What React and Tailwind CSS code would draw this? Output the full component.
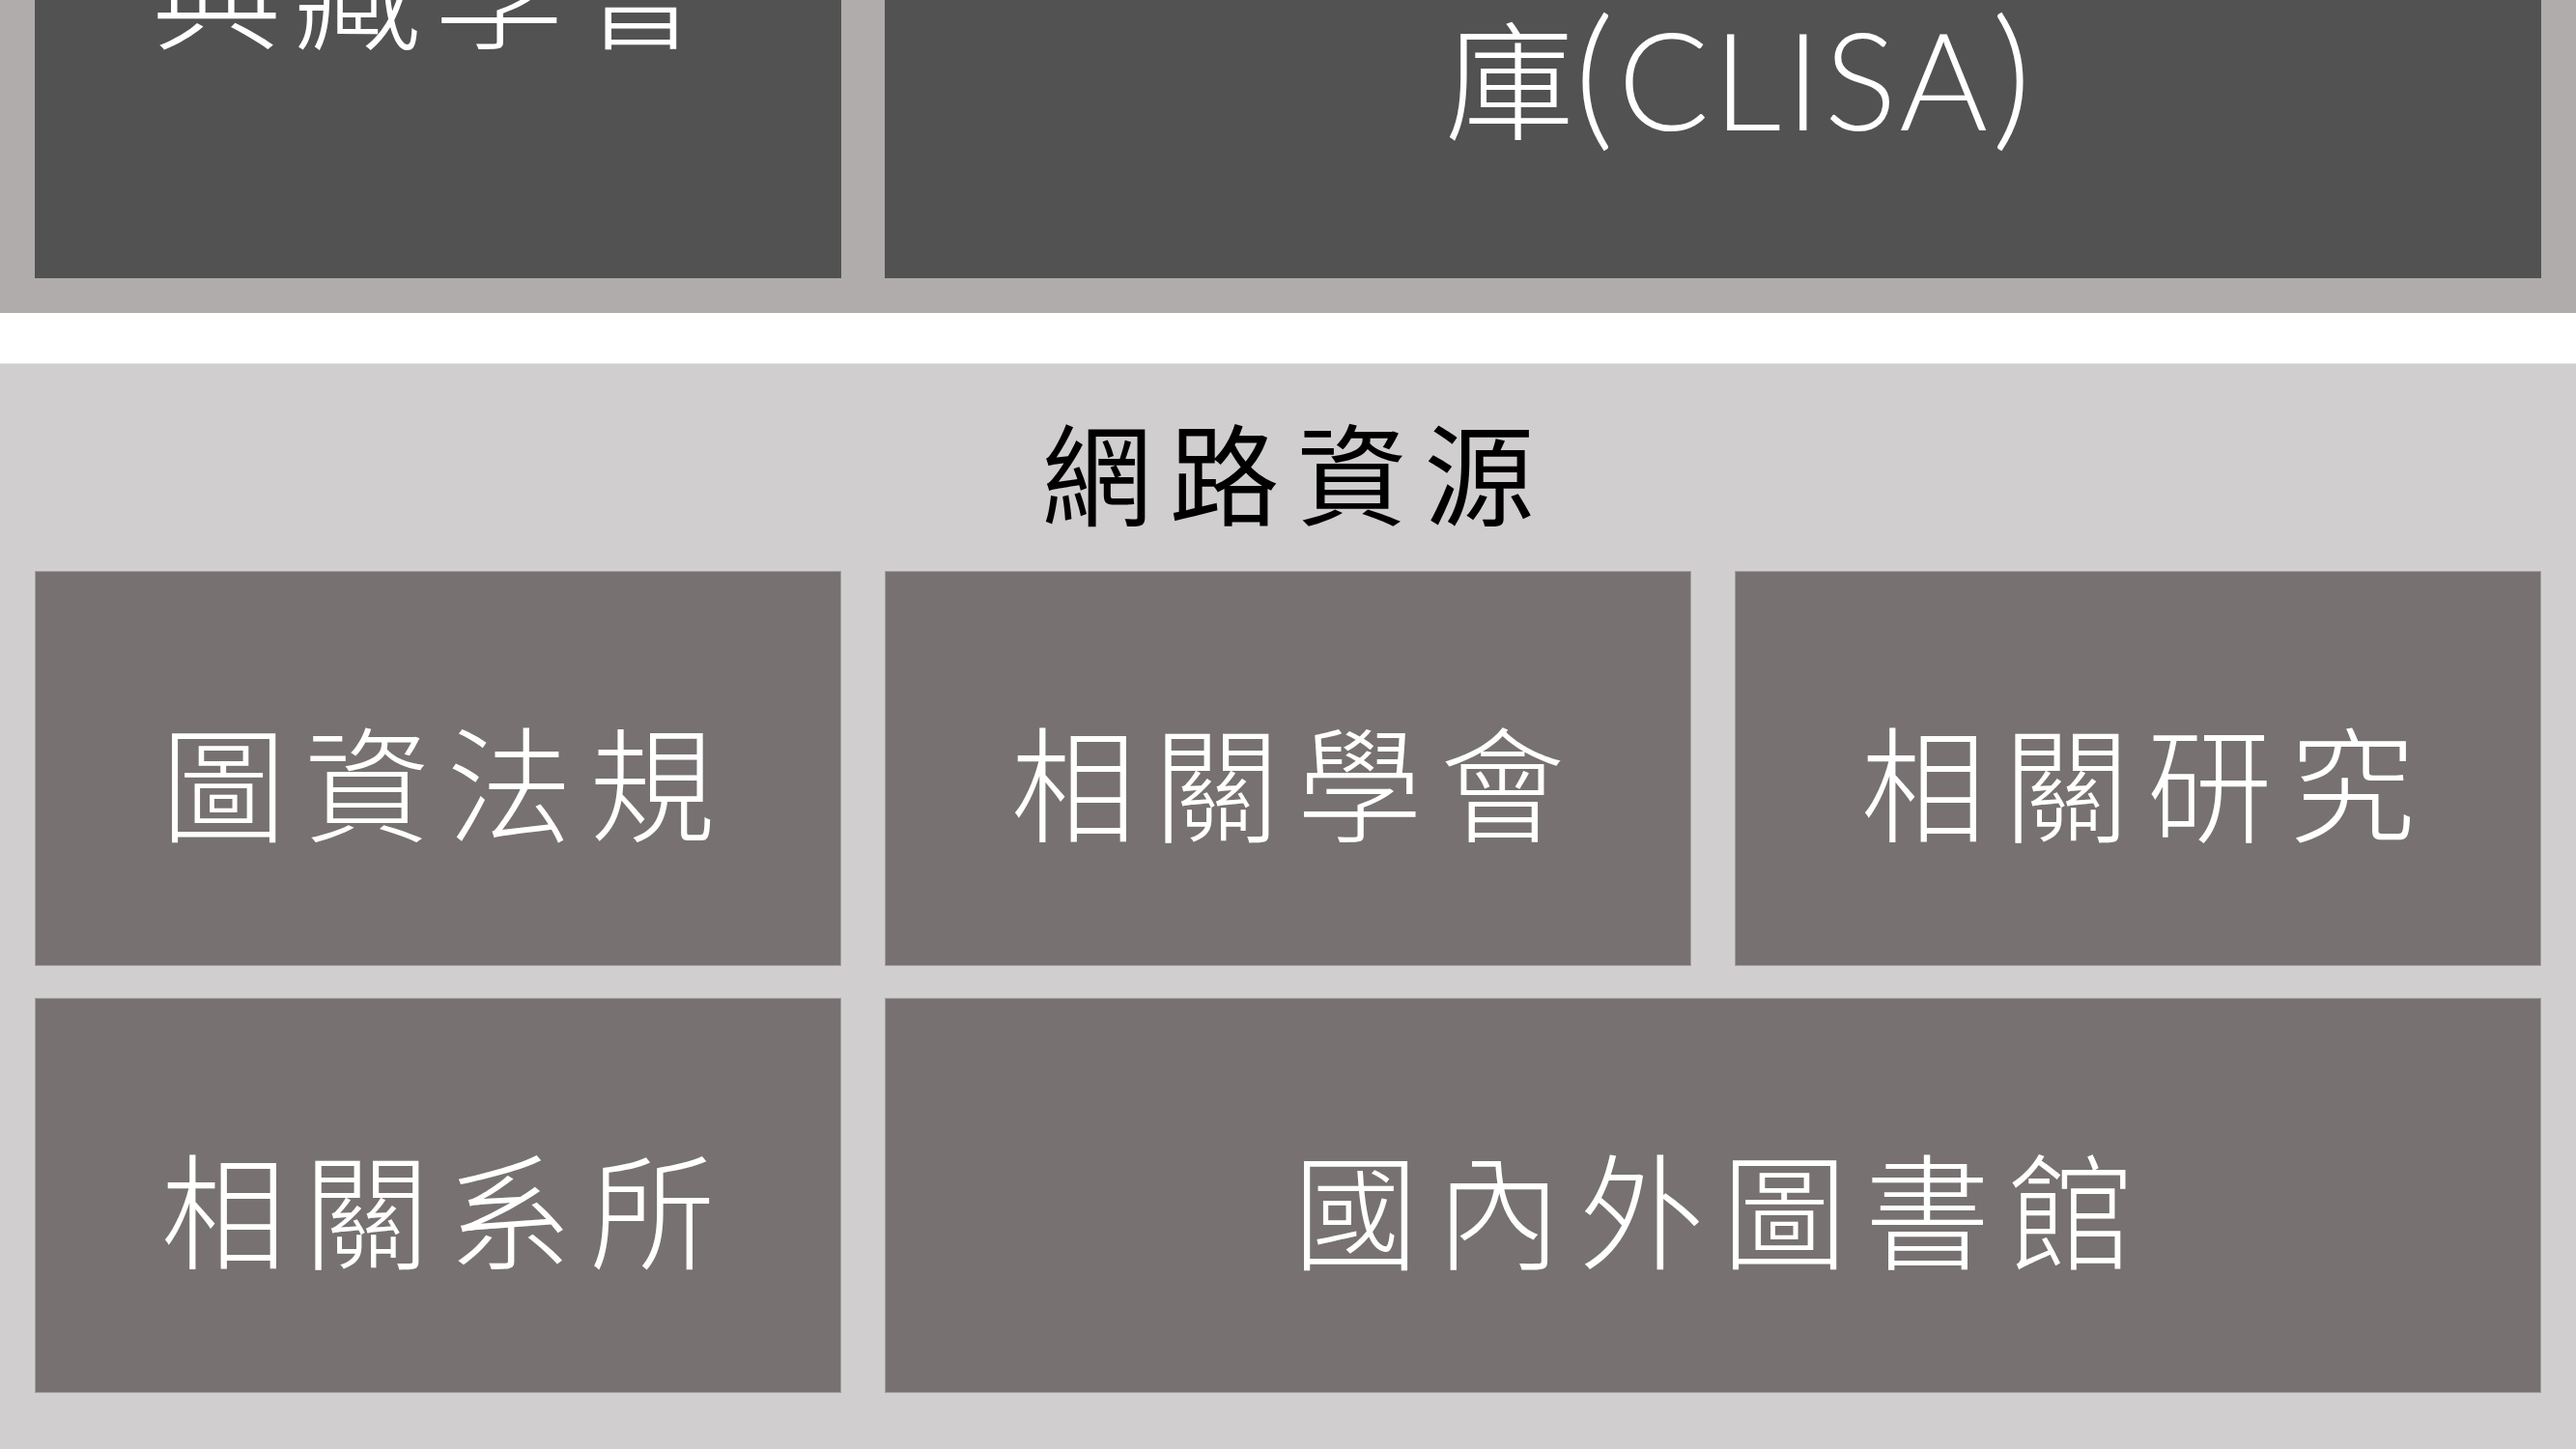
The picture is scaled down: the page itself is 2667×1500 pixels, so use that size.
const FONT = "font-['Noto_Sans_CJK_TC','Noto_Sans_CJK_SC',sans-serif]"

const LINKS = [
  { label: '圖資法規', span: 'col-span-1' },
  { label: '相關學會', span: 'col-span-1' },
  { label: '相關研究', span: 'col-span-1' },
  { label: '相關系所', span: 'col-span-1' },
  { label: '國內外圖書館', span: 'col-span-2' },
]

function Tile({ label, span }) {
  return (
    <a
      href="#"
      className={`${span} h-[409px] flex items-center justify-center pt-[18px] pl-[18px] bg-[#777171] border border-[#a29e9e] text-white text-[130px] font-light leading-none tracking-[18px] hover:bg-[#6a6464]`}
    >
      {label}
    </a>
  )
}

export default function App() {
  return (
    <div className={`min-h-screen bg-white overflow-hidden ${FONT}`}>
      {/* previous block, scrolled mostly out of view */}
      <section className="-mt-[320px] bg-[#b0acab] px-[36px] py-[36px]">
        <div className="grid grid-cols-3 gap-x-[45px]">
          <div className="h-[572px] flex flex-col items-center justify-center pb-[188px] pr-[8px] bg-[#525252] text-white text-[134px] font-light leading-[150px] tracking-[12px]">
            <span>中華民國</span>
            <span>典藏學會</span>
          </div>
          <div className="col-span-2 h-[572px] flex flex-col items-center justify-center bg-[#525252] text-white text-[134px] font-light leading-[150px] pl-[56px]">
            <span>圖書資訊學資料</span>
            <span className="flex items-center">
              庫
              <span className="font-['Lato','Open_Sans',sans-serif] font-light text-[140px] leading-[150px] tracking-[4px]">
                <span className="text-[160px] font-light">(</span>CLISA<span className="text-[160px] font-light">)</span>
              </span>
            </span>
          </div>
        </div>
      </section>

      <section className="mt-[52px] bg-[#d0cecf] border-t border-[#e2e0e0] px-[36px] pt-[34px] pb-[60px]">
        <h2 className="text-center text-black text-[114px] leading-[150px] tracking-[18px] pl-[18px] mb-[30px]">
          網路資源
        </h2>
        <div className="grid grid-cols-3 gap-x-[45px] gap-y-[33px]">
          {LINKS.map((l) => (
            <Tile key={l.label} {...l} />
          ))}
        </div>
      </section>
    </div>
  )
}
